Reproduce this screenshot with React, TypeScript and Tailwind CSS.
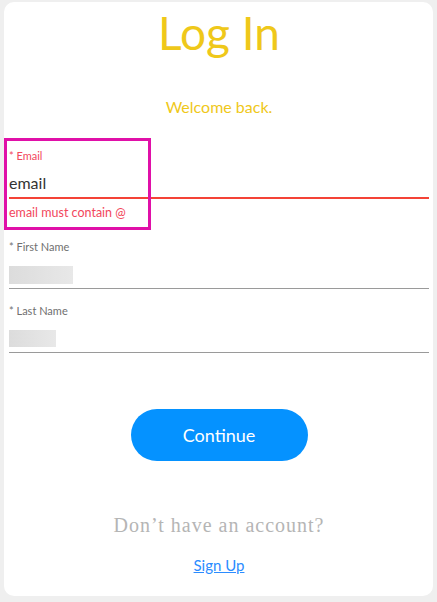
import React from "react";

const lato = { fontFamily: "Lato, 'Noto Sans', sans-serif" };

function Field({
  label,
  error,
  value,
  placeholderWidth,
  placeholderHeight,
}: {
  label: string;
  error?: string;
  value?: string;
  placeholderWidth?: string;
  placeholderHeight?: string;
}) {
  const invalid = Boolean(error);
  return (
    <div className="flex flex-col">
      <label
        className={`text-[11px] leading-[14px] ${invalid ? "text-[#f2475c]" : "text-[#707070]"}`}
      >
        * {label}
      </label>
      <div
        className={
          invalid ? "h-[36px] border-b-2 border-[#f44336]" : "h-[35px] border-b border-[#9a9a9a]"
        }
      >
        {value ? (
          <div className="pt-[10px] text-[16px] leading-[19px] text-[#333]">{value}</div>
        ) : (
          <div
            className={`mt-[12px] ${placeholderWidth} ${placeholderHeight} bg-gradient-to-r from-[#dcdcdc] to-[#e8e8e8]`}
          />
        )}
      </div>
      {error && (
        <div className="mt-[6px] text-[12.5px] leading-[16px] text-[#f2475c]">{error}</div>
      )}
    </div>
  );
}

export default function App() {
  return (
    <div className="min-h-[602px] bg-[#efefef] px-[4px] pt-[2px] pb-[6px]" style={lato}>
      <div className="h-[594px] rounded-[10px] bg-white pl-[5px] pr-[4px] pt-[2px] flex flex-col">
        <h1 className="text-center text-[46px] leading-[58px] text-[#efc81a]">Log In</h1>
        <p className="mt-[35px] text-center text-[16px] leading-[19px] text-[#efc81a]">
          Welcome back.
        </p>

        <div className="mt-[33px] flex flex-col">
          <div className="relative">
            <Field label="Email" value="email" error="email must contain @" />
            <div className="pointer-events-none absolute left-[-5px] top-[-11px] w-[147px] h-[92px] border-[3px] border-[#e010a8]" />
          </div>
          <div className="mt-[19px]">
            <Field label="First Name" placeholderWidth="w-[64px]" placeholderHeight="h-[18px]" />
          </div>
          <div className="mt-[15px]">
            <Field label="Last Name" placeholderWidth="w-[47px]" placeholderHeight="h-[17px]" />
          </div>
        </div>

        <div className="mt-[56px] flex justify-center">
          <button className="h-[52px] w-[177px] rounded-full bg-[#0592ff] text-[18px] text-white">
            Continue
          </button>
        </div>

        <p
          className="mt-[52px] text-center text-[20px] leading-[24px] tracking-[1px] text-[#b5b5b5]"
          style={{ fontFamily: "'Liberation Serif', serif" }}
        >
          Don’t have an account?
        </p>
        <div className="mt-[19px] flex justify-center">
          <a href="#" className="text-[15px] leading-[18px] text-[#2b8cff] underline">
            Sign Up
          </a>
        </div>
      </div>
    </div>
  );
}
